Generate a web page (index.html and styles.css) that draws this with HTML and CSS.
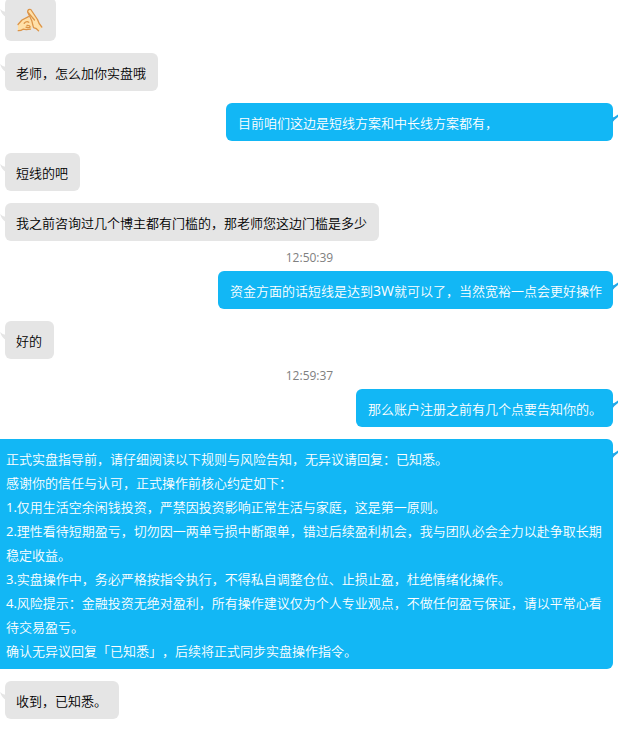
FILE: index.html
```html
<!DOCTYPE html>
<html lang="zh-CN">
<head>
<meta charset="utf-8">
<title>聊天记录</title>
<link rel="stylesheet" href="styles.css">
</head>
<body>
<main class="chat">
  <div class="bubble them sticker">
    <svg class="tail" viewBox="0 0 6 12"><path d="M0 1Q3 4 6 4V9Q2 7 0 1Z"/></svg>
    <svg class="hands" viewBox="0 0 26 24" fill="#ffe0a8" stroke="#dc9448" stroke-width="1.3" stroke-linecap="round" stroke-linejoin="round">
      <path d="M1 22.5V17L5 12L10.5 8.7L14 12L16 16L14.5 21Q8 20 5 22.3Z" stroke="none"/>
      <path d="M1 16.5L5 12L11.5 8.6M1.2 22.7Q4 22.8 6 21.2Q9 22 13.5 21.2" fill="none"/>
      <path d="M10.2 3.2Q11.5 .3 14 1.7L20.5 11.5Q21.8 16 25 19L21.8 23Q19.5 20.5 17 20.4L15 14Z" stroke="none"/>
      <path d="M17.5 12L10.6 3.8Q11 .6 13.8 1.5L20.5 11.5Q21.8 16 24.8 19M10.6 4L14.8 12.8L16.5 19.6Q19.5 20 21.6 22.8" fill="none"/>
      <path d="M7.2 15.2Q9.5 12.8 11.8 14.2M10 17.5Q12.8 17.2 13.2 19Q11.5 20.3 9 19.2" fill="none"/>
    </svg>
  </div>
  <div class="bubble them"><svg class="tail" viewBox="0 0 6 12"><path d="M0 1Q3 4 6 4V9Q2 7 0 1Z"/></svg><p>老师，怎么加你实盘哦</p></div>
  <div class="bubble me wide"><svg class="tail" viewBox="0 0 6 12"><path d="M0 4.5Q3 4 6 1.5V4Q3 6 0 10Z"/></svg><p>目前咱们这边是短线方案和中长线方案都有，</p></div>
  <div class="bubble them"><svg class="tail" viewBox="0 0 6 12"><path d="M0 1Q3 4 6 4V9Q2 7 0 1Z"/></svg><p>短线的吧</p></div>
  <div class="bubble them"><svg class="tail" viewBox="0 0 6 12"><path d="M0 1Q3 4 6 4V9Q2 7 0 1Z"/></svg><p>我之前咨询过几个博主都有门槛的，那老师您这边门槛是多少</p></div>
  <time class="stamp">12:50:39</time>
  <div class="bubble me"><svg class="tail" viewBox="0 0 6 12"><path d="M0 4.5Q3 4 6 1.5V4Q3 6 0 10Z"/></svg><p>资金方面的话短线是达到<span class="latin amount">3W</span>就可以了，当然宽裕一点会更好操作</p></div>
  <div class="bubble them"><svg class="tail" viewBox="0 0 6 12"><path d="M0 1Q3 4 6 4V9Q2 7 0 1Z"/></svg><p>好的</p></div>
  <time class="stamp">12:59:37</time>
  <div class="bubble me"><svg class="tail" viewBox="0 0 6 12"><path d="M0 4.5Q3 4 6 1.5V4Q3 6 0 10Z"/></svg><p>那么账户注册之前有几个点要告知你的。</p></div>
  <div class="bubble me notice"><svg class="tail" viewBox="0 0 6 12"><path d="M0 4.5Q3 4 6 1.5V4Q3 6 0 10Z"/></svg>
    <p>正式实盘指导前，请仔细阅读以下规则与风险告知，无异议请回复：已知悉。</p>
    <p>感谢你的信任与认可，正式操作前核心约定如下：</p>
    <p><span class="latin">1.</span>仅用生活空余闲钱投资，严禁因投资影响正常生活与家庭，这是第一原则。</p>
    <p><span class="latin">2.</span>理性看待短期盈亏，切勿因一两单亏损中断跟单，错过后续盈利机会，我与团队必会全力以赴争取长期<br>稳定收益。</p>
    <p><span class="latin">3.</span>实盘操作中，务必严格按指令执行，不得私自调整仓位、止损止盈，杜绝情绪化操作。</p>
    <p><span class="latin">4.</span>风险提示：金融投资无绝对盈利，所有操作建议仅为个人专业观点，不做任何盈亏保证，请以平常心看<br>待交易盈亏。</p>
    <p>确认无异议回复「已知悉」，后续将正式同步实盘操作指令。</p>
  </div>
  <div class="bubble them"><svg class="tail" viewBox="0 0 6 12"><path d="M0 1Q3 4 6 4V9Q2 7 0 1Z"/></svg><p>收到，已知悉。</p></div>
</main>
</body>
</html>
```
FILE: styles.css
```css
* { box-sizing: border-box; }

body {
  margin: 0;
  background: #fff;
  overflow: hidden;
}

.chat {
  display: flex;
  flex-direction: column;
  gap: 12px;
  height: 729px;
  padding: 0 5px;
  overflow: hidden;
  font: 350 13px/24px "Open Sans", "Noto Sans CJK SC", sans-serif;
  text-spacing-trim: space-all;
  font-kerning: none;
}

.bubble {
  position: relative;
  flex: none;
  border-radius: 6px;
  white-space: nowrap;
}

.bubble p {
  height: 24px;
  margin: 0;
}

.bubble p:has(br) { height: 48px; }

.them {
  align-self: flex-start;
  padding: 8px 12px 6px 11px;
  background: #e5e5e5;
  color: #000;
}

.me {
  align-self: flex-end;
  padding: 8px 11px 6px 12px;
  background: #12b7f5;
  color: #fff;
}

.latin {
  font-weight: 400;
  line-height: 1;
}

.amount { font-size: 14px; }

.wide { width: 387px; }

.notice {
  width: 619px;
  padding-left: 12px;
}

.sticker {
  width: 51px;
  height: 43px;
  margin-top: -2px;
  padding: 10px 0 0 12px;
}

.hands {
  display: block;
  width: 26px;
  height: 24px;
}

.tail {
  position: absolute;
  top: 10px;
  width: 6px;
  height: 12px;
}

.them .tail { left: -5px; fill: #e5e5e5; }
.me .tail { right: -5px; fill: #22a9e8; }

.stamp {
  flex: none;
  align-self: center;
  height: 30px;
  margin: -12px 0;
  padding-left: 1px;
  color: #808080;
  font-size: 12px;
  font-weight: 400;
  line-height: 33px;
}
```
